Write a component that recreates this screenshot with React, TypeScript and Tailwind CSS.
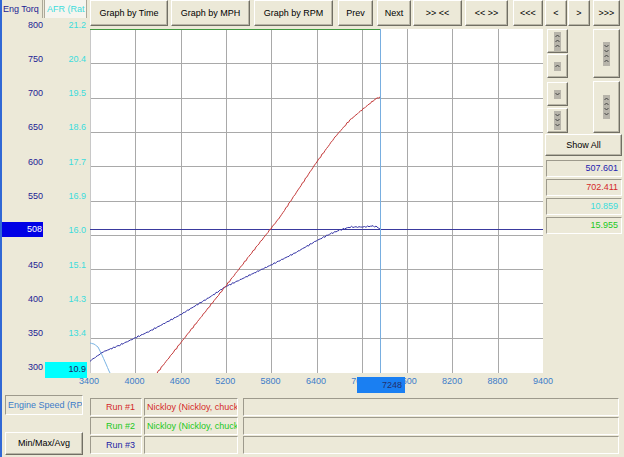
import React from 'react';

const TORQ = ['800', '750', '700', '650', '600', '550', '500', '450', '400', '350', '300'];
const AFR = ['21.2', '20.4', '19.5', '18.6', '17.7', '16.9', '16.0', '15.1', '14.3', '13.4', '12.5'];
const RPM = ['3400', '4000', '4600', '5200', '5800', '6400', '7000', '7600', '8200', '8800', '9400'];

const raised =
  'border border-t-white border-l-white border-r-[#716f64] border-b-[#716f64] shadow-[inset_-1px_-1px_0_#b8b5a6] bg-[#ece9d8]';
const sunken = 'border border-t-[#9d9a8c] border-l-[#9d9a8c] border-r-white border-b-white';

const Btn = ({ className = '', children }: { className?: string; children?: React.ReactNode }) => (
  <button className={`flex items-center justify-center leading-none text-black ${raised} ${className}`}>{children}</button>
);

// little grey strip with stacked chevrons, used on the right hand zoom buttons
const Chevs = ({ dirs }: { dirs: ('u' | 'd')[] }) => {
  const h = dirs.length * 5 + 4;
  return (
    <svg width="7" height={h} className="bg-[#b7b4aa]">
      {dirs.map((d, i) => {
        const y = i * 5 + 2;
        const pts = d === 'u' ? `1.5,${y + 3} 3.5,${y + 1} 5.5,${y + 3}` : `1.5,${y + 1} 3.5,${y + 3} 5.5,${y + 1}`;
        return <polyline key={i} points={pts} fill="none" stroke="#3a3a3a" strokeWidth="0.9" />;
      })}
    </svg>
  );
};

function trace(keys: [number, number][], amp: number, seed: number) {
  const out: string[] = [];
  for (let i = 0; i < keys.length - 1; i++) {
    const [x0, y0] = keys[i];
    const [x1, y1] = keys[i + 1];
    for (let x = x0; x < x1; x += 1.5) {
      const t = (x - x0) / (x1 - x0);
      const y = y0 + (y1 - y0) * t + Math.sin(x * 1.9 + seed) * Math.sin(x * 0.37 + seed * 2) * amp;
      out.push(`${x.toFixed(1)},${y.toFixed(1)}`);
    }
  }
  const last = keys[keys.length - 1];
  out.push(`${last[0]},${last[1]}`);
  return out.join(' ');
}

const RED: [number, number][] = [
  [67, 344], [100, 302], [135, 258], [160, 226], [190, 188], [226, 134], [245, 108], [260, 91], [273, 80], [283, 72], [287, 69], [290, 68],
];
const BLUE: [number, number][] = [
  [0, 332], [13, 323], [30, 316], [60, 302], [90, 286], [120, 268], [135, 258], [160, 246], [181, 236], [205, 224], [226, 212],
  [240, 205], [250, 201], [260, 198], [273, 198], [283, 197], [287, 198], [290, 200],
];
const CYAN: [number, number][] = [[0, 314], [4, 315], [8, 318], [12, 326], [16, 335], [19, 342], [20, 344]];

const Plot = () => {
  const W = 453;
  const H = 344;
  const dx = 45.3;
  const dy = 34.3;
  return (
    <div className="w-[453px] h-[344px] bg-white shrink-0">
      <svg width={W} height={H} className="block">
        {Array.from({ length: 9 }, (_, i) => (
          <line key={'v' + i} x1={Math.round(dx * (i + 1)) + 0.5} x2={Math.round(dx * (i + 1)) + 0.5} y1={0} y2={H} stroke="#a9a9a9" />
        ))}
        {Array.from({ length: 9 }, (_, i) => (
          <line key={'h' + i} y1={Math.round(dy * (i + 1)) + 0.5} y2={Math.round(dy * (i + 1)) + 0.5} x1={0} x2={W} stroke="#a9a9a9" />
        ))}
        <line x1={0.5} x2={0.5} y1={0} y2={H} stroke="#c8c8c8" />
        <line x1={0} x2={290} y1={0.5} y2={0.5} stroke="#3f9a3f" />
        <line x1={0} x2={W} y1={200.5} y2={200.5} stroke="#3a3a9e" />
        <line x1={290.5} x2={290.5} y1={0} y2={H} stroke="#78aee0" />
        <polyline points={trace(CYAN, 0, 0)} fill="none" stroke="#7ab4e4" strokeWidth="1" />
        <polyline points={trace(BLUE, 0.8, 1.3)} fill="none" stroke="#3535a6" strokeWidth="1" />
        <polyline points={trace(RED, 0.8, 0.4)} fill="none" stroke="#c43a3a" strokeWidth="1" />
      </svg>
    </div>
  );
};

export default function App() {
  return (
    <div className="w-[624px] h-[457px] overflow-hidden bg-[#ece9d8] border-l-2 border-[#3168d5] flex flex-col font-['Liberation_Sans',Arial,sans-serif] text-[9px] leading-none">
      {/* upper part: axis column, toolbar, plot and right hand controls */}
      <div className="flex h-[373px] shrink-0">
        <div className="w-[88px] shrink-0 flex flex-col">
          <div className="flex h-[18px] shrink-0">
            <div className="w-[41px] flex items-center pl-[1px] text-[#1c1c94] border-r border-[#aca899] whitespace-nowrap overflow-hidden">
              Eng Torq
            </div>
            <div className="ml-[1px] w-[43px] flex items-center pl-[2px] text-[#3cdcdc] bg-[#f6f5ef] border-l border-r border-[#aca899] whitespace-nowrap overflow-hidden">
              AFR (Rat
            </div>
          </div>
          <div className="h-[357px] shrink-0 flex flex-col justify-between">
            {TORQ.map((t, i) => (
              <div key={t} className="flex h-[14px] items-center">
                {i === 6 ? (
                  <div className="-ml-[2px] -mt-[3px] w-[43px] h-[15px] bg-[#0000e6] text-white flex items-center justify-end pr-[1px]">508</div>
                ) : (
                  <div className="w-[41px] text-right text-[#1c1c94]">{t}</div>
                )}
                {i === 10 ? (
                  <div className="ml-[2px] mt-[4px] w-[42px] h-[16px] bg-[#00ffff] text-[#1c1c60] flex items-center justify-end pr-[1px]">10.9</div>
                ) : (
                  <div className="ml-[2px] w-[42px] text-right pr-[1px] text-[#3cdcdc]">{AFR[i]}</div>
                )}
              </div>
            ))}
          </div>
        </div>

        <div className="w-[534px] shrink-0 flex flex-col">
          <div className="h-[29px] shrink-0 flex items-start">
            <Btn className="w-[78px] h-[26px]">Graph by Time</Btn>
            <Btn className="ml-[3px] w-[79px] h-[26px]">Graph by MPH</Btn>
            <Btn className="ml-[4px] w-[79px] h-[26px]">Graph by RPM</Btn>
            <Btn className="ml-[5px] w-[35px] h-[26px]">Prev</Btn>
            <Btn className="ml-[4px] w-[34px] h-[26px]">Next</Btn>
            <Btn className="ml-[2px] w-[49px] h-[26px]">&gt;&gt; &lt;&lt;</Btn>
            <Btn className="ml-[3px] w-[43px] h-[26px]">&lt;&lt; &gt;&gt;</Btn>
            <Btn className="ml-[5px] w-[30px] h-[26px]">&lt;&lt;&lt;</Btn>
            <Btn className="ml-[2px] w-[22px] h-[26px]">&lt;</Btn>
            <Btn className="ml-[1px] w-[22px] h-[26px]">&gt;</Btn>
            <Btn className="ml-[3px] w-[27px] h-[26px]">&gt;&gt;&gt;</Btn>
          </div>
          <div className="flex">
            <Plot />
            <div className="w-[81px] shrink-0 flex flex-col">
              <div className="flex h-[104px] shrink-0">
                <div className="ml-[4px] w-[21px] flex flex-col">
                  <Btn className="h-[24px]"><Chevs dirs={['u', 'u', 'u']} /></Btn>
                  <Btn className="mt-[1px] h-[24px]"><Chevs dirs={['u']} /></Btn>
                  <Btn className="mt-[4px] h-[24px]"><Chevs dirs={['d']} /></Btn>
                  <Btn className="mt-[2px] h-[25px]"><Chevs dirs={['d', 'd', 'd']} /></Btn>
                </div>
                <div className="ml-[25px] w-[27px] flex flex-col">
                  <Btn className="h-[49px]"><Chevs dirs={['d', 'd', 'u', 'u']} /></Btn>
                  <Btn className="mt-[3px] h-[52px]"><Chevs dirs={['u', 'u', 'd', 'd']} /></Btn>
                </div>
              </div>
              <Btn className="ml-[2px] mt-[1px] w-[77px] h-[22px]">Show All</Btn>
              <div className="ml-[3px] mt-[4px] w-[76px] flex flex-col gap-[2px]">
                <div className={`h-[17px] ${sunken} flex items-center justify-end pr-[3px] text-[#2424b0]`}>507.601</div>
                <div className={`h-[17px] ${sunken} flex items-center justify-end pr-[3px] text-[#d42a2a]`}>702.411</div>
                <div className={`h-[17px] ${sunken} flex items-center justify-end pr-[3px] text-[#3cdcdc]`}>10.859</div>
                <div className={`h-[17px] ${sunken} flex items-center justify-end pr-[3px] text-[#22c822]`}>15.955</div>
              </div>
            </div>
          </div>
        </div>
      </div>

      {/* rpm axis */}
      <div className="relative h-[20px] shrink-0">
        <div className="ml-[67px] w-[494px] flex justify-between pt-[4px] text-[#3c7cc8]">
          {RPM.map(r => (
            <div key={r} className="w-[40px] text-center">{r}</div>
          ))}
        </div>
        <div className="absolute left-[355px] top-[4px] w-[48px] h-[16px] bg-[#1a7ff2] text-[#22306e] flex items-center justify-end pr-[3px]">7248</div>
      </div>

      {/* run legend */}
      <div className="flex h-[64px] shrink-0">
        <div className="ml-[3px] w-[78px] flex flex-col">
          <div className={`mt-[2px] h-[20px] ${sunken} flex items-center pl-[2px] text-[#3c7cc8] whitespace-nowrap overflow-hidden`}>Engine Speed (RPM)</div>
          <Btn className="mt-[17px] h-[23px]">Min/Max/Avg</Btn>
        </div>
        <div className="ml-[7px] w-[52px] mt-[5px] flex flex-col gap-[1px]">
          <div className={`h-[18px] ${sunken} flex items-center justify-end pr-[6px] text-[#d42a2a]`}>Run #1</div>
          <div className={`h-[18px] ${sunken} flex items-center justify-end pr-[6px] text-[#22c822]`}>Run #2</div>
          <div className={`h-[18px] ${sunken} flex items-center justify-end pr-[6px] text-[#2424a6]`}>Run #3</div>
        </div>
        <div className="ml-[2px] w-[94px] mt-[5px] flex flex-col gap-[1px]">
          <div className={`h-[18px] ${sunken} flex items-center pl-[2px] text-[#d42a2a] whitespace-nowrap overflow-hidden`}>Nickloy (Nickloy, chuck)</div>
          <div className={`h-[18px] ${sunken} flex items-center pl-[2px] text-[#22c822] whitespace-nowrap overflow-hidden`}>Nickloy (Nickloy, chuck)</div>
          <div className={`h-[18px] ${sunken}`}></div>
        </div>
        <div className="ml-[5px] w-[376px] mt-[5px] flex flex-col gap-[1px]">
          <div className={`h-[18px] ${sunken}`}></div>
          <div className={`h-[18px] ${sunken}`}></div>
          <div className={`h-[18px] ${sunken}`}></div>
        </div>
      </div>
    </div>
  );
}
